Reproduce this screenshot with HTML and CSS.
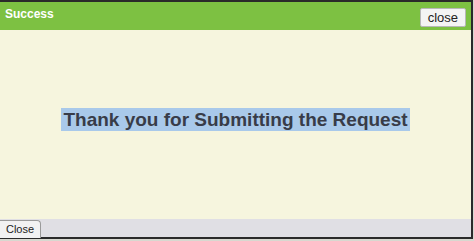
FILE: index.html
```html
<!DOCTYPE html>
<html lang="en">
<head>
  <meta charset="UTF-8" />
  <title>Success</title>
  <link rel="stylesheet" href="styles.css">
</head>
<body>
  <div class="dialog">
    <div class="dialog-header">
      <span class="dialog-title">Success</span>
      <button class="btn-close">close</button>
    </div>
    <div class="dialog-body">
      <p class="message"><mark>Thank you for Submitting the Request</mark></p>
    </div>
    <div class="dialog-footer">
      <button class="btn-footer">Close</button>
    </div>
  </div>
</body>
</html>
```

FILE: styles.css
```css
body {
  margin: 0;
  font-family: 'Liberation Sans', Arial, sans-serif;
  background: #d8d8d0;
}

.dialog {
  width: 471px;
  border-top: 2px solid #2a2a2a;
  border-right: 2px solid #2a2a2a;
  border-bottom: 2px solid #2a2a2a;
  background: #f6f5de;
}

.dialog-header {
  background: #7dc142;
  height: 28px;
  display: flex;
  align-items: center;
  justify-content: space-between;
  padding: 0 5px 0 5px;
}

.dialog-title {
  color: #fff;
  font-weight: bold;
  font-size: 12px;
  margin-top: -4px;
}

.btn-close {
  font-family: 'Liberation Sans', Arial, sans-serif;
  font-size: 13px;
  color: #222;
  background: #f4f4f4;
  border: 1px solid #b8b8b8;
  border-radius: 2px;
  padding: 0 7px;
  height: 19px;
  margin-top: 3px;
}

.dialog-body {
  height: 189px;
  display: flex;
  align-items: center;
  justify-content: center;
}

.message {
  margin: 0 0 10px 0;
  font-size: 19px;
  font-weight: bold;
  color: #383c48;
}

.message mark {
  background: #a9c9ea;
  color: inherit;
  padding: 1px 2px;
}

.dialog-footer {
  background: #e0dfe4;
  height: 18px;
}

.btn-footer {
  font-family: 'Liberation Sans', Arial, sans-serif;
  font-size: 11px;
  color: #222;
  background: #f2f2f2;
  border: 1px solid #9a9a9a;
  border-left: none;
  border-bottom: none;
  border-radius: 0 4px 0 0;
  height: 18px;
  width: 41px;
  padding: 0;
}
```
